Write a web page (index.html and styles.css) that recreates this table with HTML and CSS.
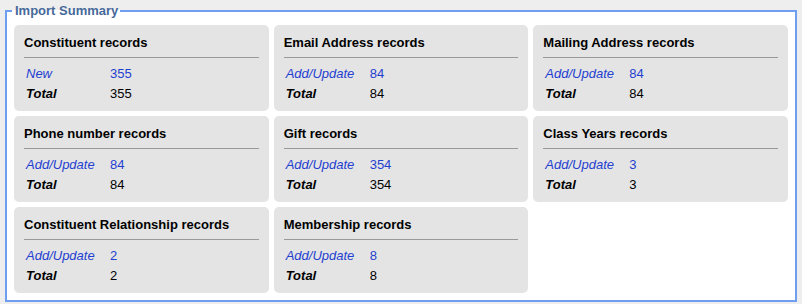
FILE: index.html
```html
<!DOCTYPE html>
<html>
<head>
<meta charset="utf-8">
<link rel="stylesheet" href="styles.css">
</head>
<body>
<fieldset class="summary">
  <legend class="summary-title">Import Summary</legend>
  <div class="grid">
    <div class="card">
      <div class="card-title">Constituent records</div>
      <table class="stats">
        <tr><td class="label link">New</td><td class="link">355</td></tr>
        <tr><td class="label total">Total</td><td>355</td></tr>
      </table>
    </div>
    <div class="card">
      <div class="card-title">Email Address records</div>
      <table class="stats">
        <tr><td class="label link">Add/Update</td><td class="link">84</td></tr>
        <tr><td class="label total">Total</td><td>84</td></tr>
      </table>
    </div>
    <div class="card">
      <div class="card-title">Mailing Address records</div>
      <table class="stats">
        <tr><td class="label link">Add/Update</td><td class="link">84</td></tr>
        <tr><td class="label total">Total</td><td>84</td></tr>
      </table>
    </div>
    <div class="card">
      <div class="card-title">Phone number records</div>
      <table class="stats">
        <tr><td class="label link">Add/Update</td><td class="link">84</td></tr>
        <tr><td class="label total">Total</td><td>84</td></tr>
      </table>
    </div>
    <div class="card">
      <div class="card-title">Gift records</div>
      <table class="stats">
        <tr><td class="label link">Add/Update</td><td class="link">354</td></tr>
        <tr><td class="label total">Total</td><td>354</td></tr>
      </table>
    </div>
    <div class="card">
      <div class="card-title">Class Years records</div>
      <table class="stats">
        <tr><td class="label link">Add/Update</td><td class="link">3</td></tr>
        <tr><td class="label total">Total</td><td>3</td></tr>
      </table>
    </div>
    <div class="card">
      <div class="card-title">Constituent Relationship records</div>
      <table class="stats">
        <tr><td class="label link">Add/Update</td><td class="link">2</td></tr>
        <tr><td class="label total">Total</td><td>2</td></tr>
      </table>
    </div>
    <div class="card">
      <div class="card-title">Membership records</div>
      <table class="stats">
        <tr><td class="label link">Add/Update</td><td class="link">8</td></tr>
        <tr><td class="label total">Total</td><td>8</td></tr>
      </table>
    </div>
  </div>
</fieldset>
</body>
</html>
```

FILE: styles.css
```css
html, body {
  margin: 0;
  padding: 0;
  background: #eeeeee;
}
body {
  font-family: "Liberation Sans", Arial, sans-serif;
  font-size: 13px;
  color: #000;
  padding-top: 1px;
}
.summary {
  margin: 0 5px;
  padding: 4px 7px 7px;
  border: 2px solid #6f9ef0;
  background: #ffffff;
  min-width: 0;
}
.summary-title {
  font-weight: bold;
  font-size: 13px;
  line-height: 20px;
  color: #46699a;
  padding: 0 2px 0 3px;
  margin-left: -2px;
}
.grid {
  display: grid;
  grid-template-columns: repeat(3, 1fr);
  gap: 5px;
}
.card {
  background: #e4e4e4;
  border-radius: 5px;
  padding: 10px 10px 7px;
}
.card-title {
  font-weight: bold;
  line-height: 16px;
  padding-bottom: 6px;
  border-bottom: 1px solid #999999;
  margin-bottom: 6px;
}
.stats {
  border-collapse: collapse;
  border-spacing: 0;
  line-height: 20px;
  font-size: 13px;
}
.stats td {
  padding: 0 2px;
}
.stats .label {
  width: 80px;
  font-style: italic;
}
.link {
  color: #1f3fd0;
}
.total {
  font-weight: bold;
}
```
